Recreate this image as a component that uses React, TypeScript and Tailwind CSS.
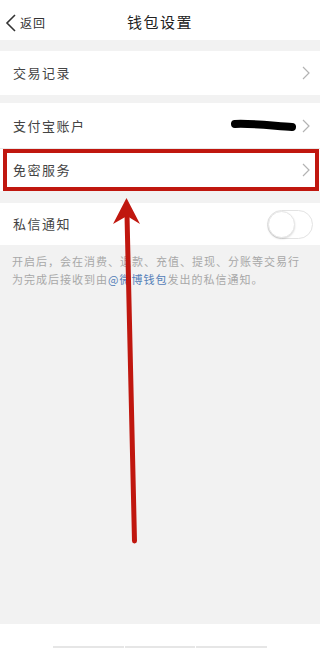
const font = {
  fontFamily: '"Noto Sans CJK SC", "Noto Sans", sans-serif',
};

function Chevron() {
  return (
    <svg width="8" height="14" viewBox="0 0 8 14" className="shrink-0" aria-hidden="true">
      <path d="M1 1 L7 7 L1 13" fill="none" stroke="#b3b3b3" strokeWidth="1.2" />
    </svg>
  );
}

function Row({ label, children }: { label: string; children?: React.ReactNode }) {
  return (
    <div className="flex h-full items-center justify-between pl-[13px] pr-[10px]">
      <span className="text-[13px] tracking-[1.5px] text-[#444]">{label}</span>
      <div className="flex items-center gap-[6px]">
        {children}
        <Chevron />
      </div>
    </div>
  );
}

export default function App() {
  return (
    <div className="relative flex h-[648px] w-[320px] flex-col overflow-hidden bg-[#f2f2f2]" style={font}>
      {/* header */}
      <header className="relative flex h-10 items-center justify-center bg-white pt-[5px]">
        <div className="absolute left-[5px] top-0 flex h-10 items-center gap-[3px] pt-[5px]">
          <svg width="12" height="18" viewBox="0 0 12 18" aria-hidden="true">
            <path d="M10 1 L2 9 L10 17" fill="none" stroke="#333" strokeWidth="1.6" />
          </svg>
          <span className="text-[12px] tracking-[1px] text-[#333]">返回</span>
        </div>
        <h1 className="text-[15px] tracking-[1.5px] text-[#222]">钱包设置</h1>
      </header>

      <div className="mt-[11px] h-[44px] bg-white">
        <Row label="交易记录" />
      </div>

      <div className="mt-2 h-[45px] bg-white">
        <Row label="支付宝账户">
          <svg width="66" height="14" viewBox="0 0 66 14" aria-hidden="true">
            <path d="M5 5 C20 4 45 7 62 8" fill="none" stroke="#000" strokeWidth="8" strokeLinecap="round" />
          </svg>
        </Row>
      </div>
      <div className="h-px bg-[#e8e8e8]" />
      <div className="relative h-[42px] bg-white">
        <Row label="免密服务" />
        <div className="absolute inset-y-0 left-[3px] right-[1px] border-4 border-[#c0170f]" />
      </div>

      <div className="mt-[12px] flex h-[42px] items-center justify-between bg-white pl-[13px] pr-[7px]">
        <span className="text-[13px] tracking-[1.5px] text-[#444]">私信通知</span>
        <div className="relative h-[29px] w-[46px] rounded-full border border-[#e3e3e3] bg-white">
          <div className="absolute left-0 top-0 h-[27px] w-[27px] rounded-full border border-[#e6e6e6] bg-white shadow-[0_1px_2px_rgba(0,0,0,0.15)]" />
        </div>
      </div>

      <p className="px-[12px] pt-[7px] text-[11px] leading-[18px] tracking-[1px] text-[#a8a8a8]">
        开启后，会在消费、退款、充值、提现、分账等交易行为完成后接收到由<span className="text-[#5580b8]">@微博钱包</span>发出的私信通知。
      </p>

      <div className="flex-1" />

      <footer className="flex h-6 items-end justify-center gap-px bg-white">
        <div className="h-[2px] w-[71px] bg-[#e6e6e6]" />
        <div className="h-[2px] w-[70px] bg-[#e6e6e6]" />
        <div className="h-[2px] w-[71px] bg-[#e6e6e6]" />
      </footer>

      {/* annotation arrow */}
      <svg className="pointer-events-none absolute left-0 top-0" width="320" height="648" viewBox="0 0 320 648" aria-hidden="true">
        <line x1="134.5" y1="541" x2="127" y2="215" stroke="#c0170f" strokeWidth="5" strokeLinecap="round" />
        <path d="M126.5 198 L140 224 L127 216 L113 224 Z" fill="#c0170f" />
      </svg>
    </div>
  );
}
